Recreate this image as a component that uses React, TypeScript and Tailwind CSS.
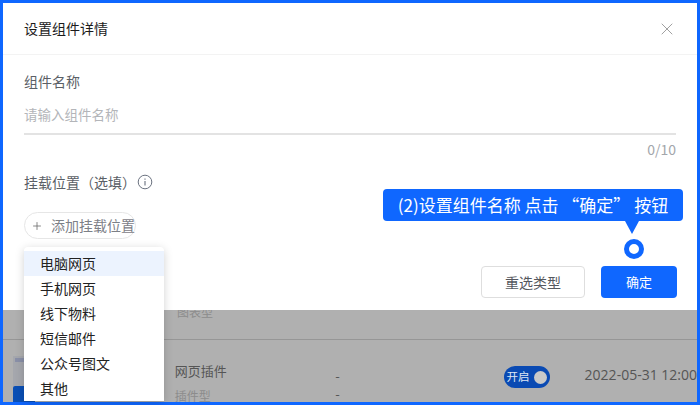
import { Plus, X } from 'lucide-react';

const cjk = { fontFamily: '"Noto Sans CJK SC", "Liberation Sans", sans-serif' };

const menuItems = ['电脑网页', '手机网页', '线下物料', '短信邮件', '公众号图文', '其他'];

function InfoIcon() {
  return (
    <svg width="16" height="16" viewBox="0 0 16 16" fill="none" stroke="#6b7280" className="ml-[1px]">
      <circle cx="8" cy="8" r="6.8" strokeWidth="1" />
      <path d="M8 7v4.5M8 4.5v1.2" strokeWidth="1.1" />
    </svg>
  );
}

function PluginThumb() {
  return (
    <div className="flex w-[26px] flex-col pt-[16px]">
      <div className="h-[30px] w-[22px] bg-[#a5a7ad] pl-[2px] pt-[2px]">
        <div className="h-[4px] w-[10px] bg-[#8a90a8]" />
      </div>
      <div className="h-[20px] w-[22px] rounded-[2px] bg-[#0a4fb5]" />
    </div>
  );
}

export default function App() {
  return (
    <div
      className="flex h-[405px] w-[700px] flex-col overflow-hidden border-[3px] border-[#0f67ff] bg-[#b0b0b0]"
      style={cjk}
    >
      <div className="relative flex h-[307px] shrink-0 flex-col bg-white">
        <div className="flex h-[52px] shrink-0 items-center justify-between border-b border-[#f3f3f3] pl-[21px] pr-[20px]">
          <span className="text-[14px] text-[#1b1b1b]">设置组件详情</span>
          <X size={20} strokeWidth={1} color="#8d8d8d" />
        </div>

        <div className="flex flex-col px-[21px] pt-[16px]">
          <div className="text-[14px] leading-[20px] text-[#5b5f66]">组件名称</div>
          <div className="mt-[13px] h-[31px] border-b-2 border-[#e3e3e3] text-[13.5px] leading-[20px] text-[#b3b5b9]">
            请输入组件名称
          </div>
          <div className="mt-[5px] text-right text-[14px] leading-[18px] text-[#a3a6ab]">0/10</div>
          <div className="mt-[14px] flex items-center text-[14px] leading-[20px] text-[#5b5f66]">
            挂载位置（选填）
            <InfoIcon />
          </div>
          <button className="mt-[20px] flex h-[27px] w-[112px] items-center rounded-full border border-[#e6e6e6] pl-[6px] text-[14px] text-[#7d8087]">
            <Plus size={12} strokeWidth={1.6} color="#6b6b6b" className="mr-[8px]" />
            添加挂载位置
          </button>
        </div>

        <div className="mt-auto flex justify-end gap-[16px] pb-[12px] pr-[20px]">
          <button className="h-[32px] w-[104px] rounded-[4px] border border-[#dedede] text-[14px] text-[#55585e]">
            重选类型
          </button>
          <button className="h-[32px] w-[76px] rounded-[4px] bg-[#0f67ff] text-[13px] text-white">确定</button>
        </div>
      </div>

      <div className="flex flex-col">
        <div className="flex h-[30px] shrink-0 border-b border-[#969696] pl-[174px] text-[12px] leading-[12px] text-[#8c8c8c]">
          <span className="-mt-[4px]">图表型</span>
        </div>
        <div className="flex pl-[10px]">
          <PluginThumb />
          <div className="ml-[138px] flex w-[175px] flex-col pt-[22px]">
            <span className="text-[13px] leading-[18px] text-[#555555]">网页插件</span>
            <span className="mt-[7px] text-[12px] leading-[18px] text-[#8c8c8c]">插件型</span>
          </div>
          <span className="pt-[27px] text-[13px] leading-[18px] text-[#555555]">--</span>
          <div className="ml-[160px] mt-[26px] flex h-[22px] w-[46px] shrink-0 items-center justify-between rounded-full bg-[#0a4ab3] px-[3px] text-[11.5px] text-[#dfe6f3]">
            开启
            <span className="h-[13px] w-[13px] rounded-full bg-[#c9c9c9]" />
          </div>
          <span className="ml-[35px] whitespace-nowrap pt-[25px] text-[14px] leading-[20px] text-[#555555]" style={{ fontFamily: '"Open Sans", sans-serif' }}>
            2022-05-31 12:00
          </span>
        </div>
      </div>

      {/* dropdown over the modal edge */}
      <div className="absolute left-[24px] top-[247px] w-[140px] rounded-t-[4px] bg-white pt-[4px] shadow-[0_2px_10px_rgba(0,0,0,0.18)]">
        {menuItems.map((item, i) => (
          <div
            key={item}
            className={`h-[25px] pl-[16px] text-[14px] leading-[25px] text-[#222222] ${i === 0 ? 'bg-[#ecf3fe]' : ''}`}
          >
            {item}
          </div>
        ))}
      </div>

      {/* guide tip */}
      <div className="absolute left-[383px] top-[189px] flex flex-col items-center">
        <div className="flex h-[32px] w-[300px] items-center justify-center rounded-[4px] bg-[#0f67ff] text-[17px] whitespace-nowrap text-white">
          (2)设置组件名称 点击 “确定” 按钮
        </div>
      </div>
      <div className="absolute left-[625px] top-[221px] h-0 w-0 border-x-[7px] border-t-[13px] border-x-transparent border-t-[#0f67ff]" />
      <div className="absolute left-[624px] top-[239px] h-[20px] w-[20px] rounded-full border-[5px] border-[#0f67ff] bg-white" />
    </div>
  );
}
